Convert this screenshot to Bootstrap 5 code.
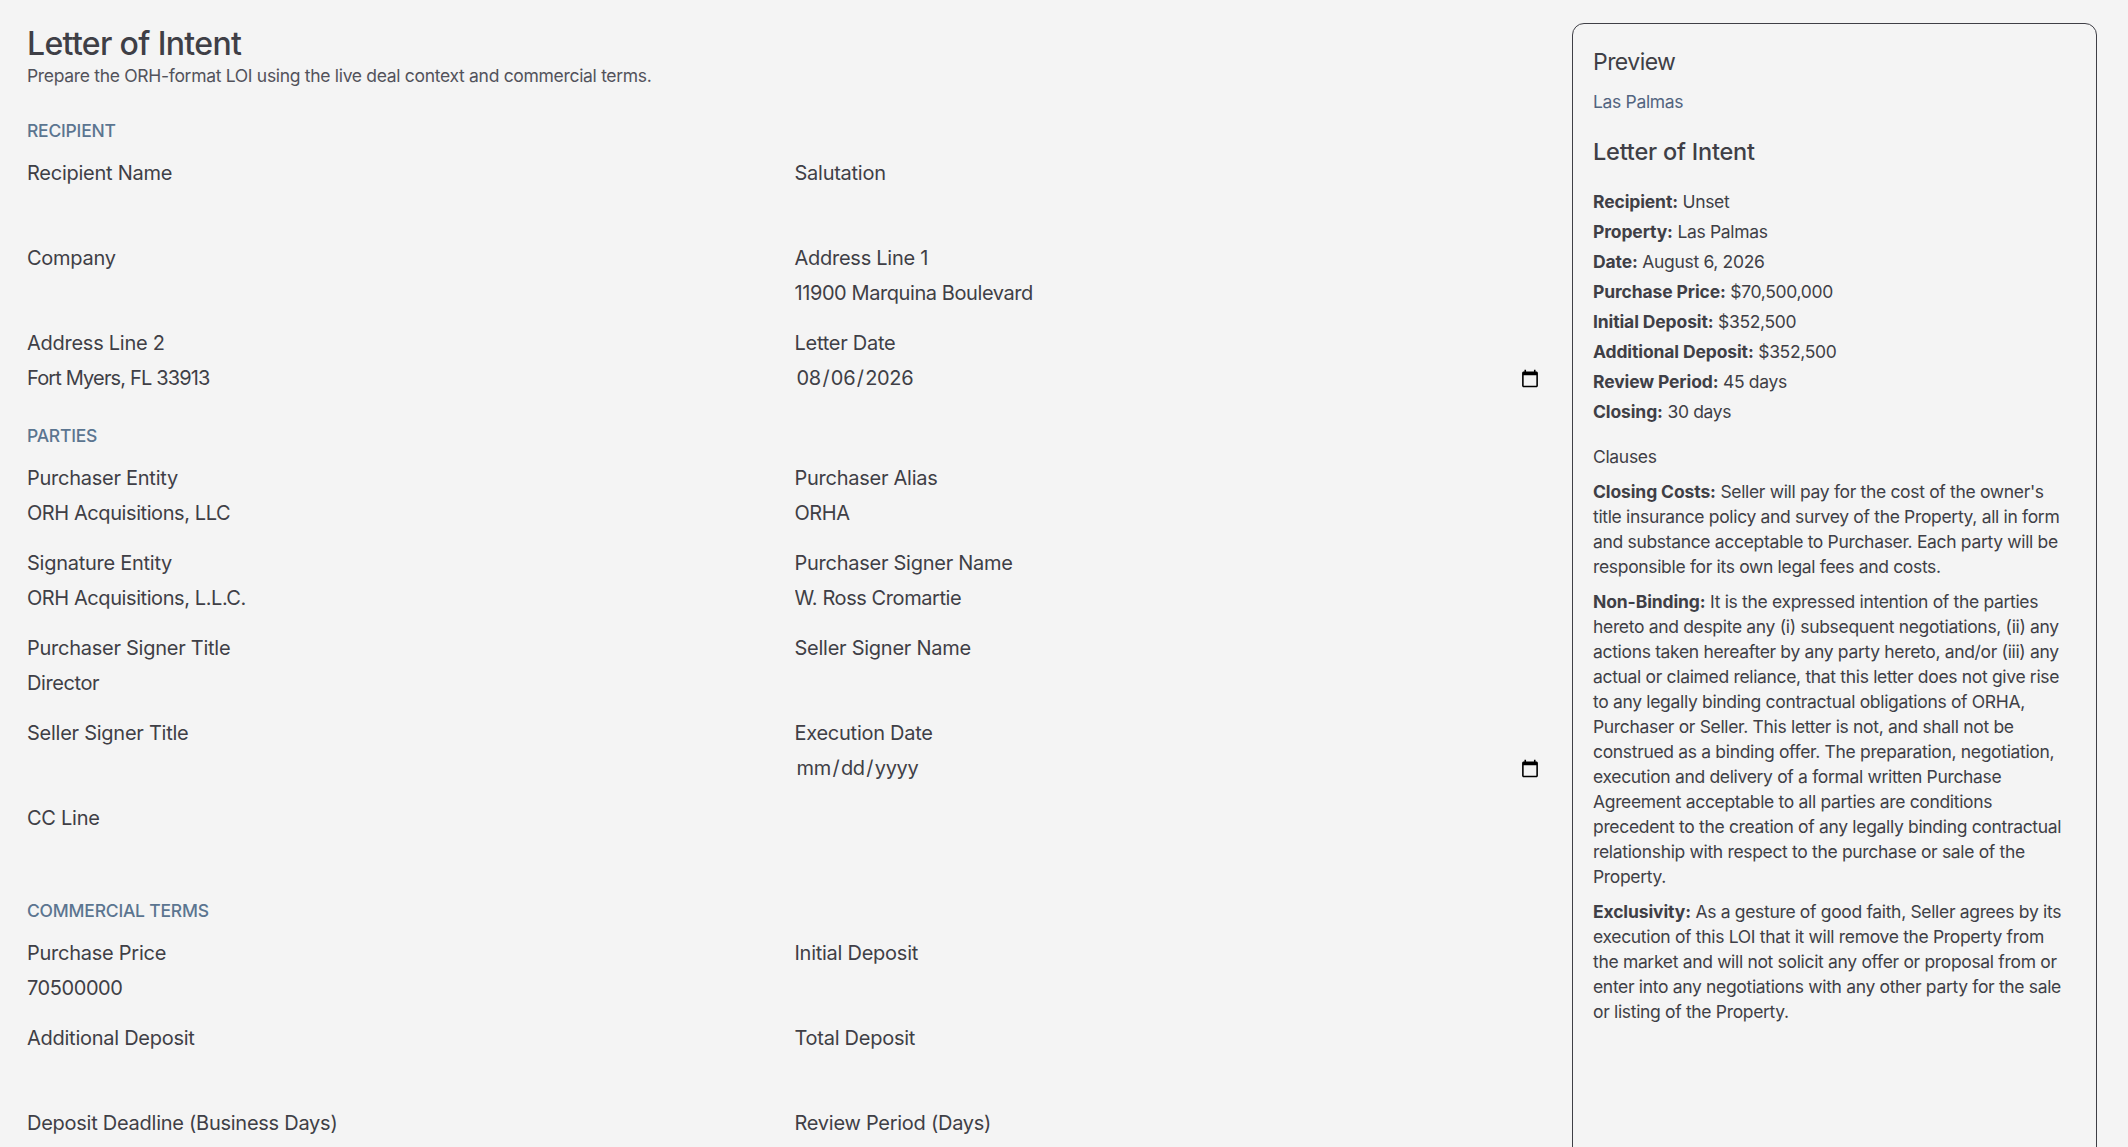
<!DOCTYPE html>
<html lang="en">
<head>
<meta charset="utf-8">
<title>Letter of Intent</title>
<link href="https://cdn.jsdelivr.net/npm/bootstrap@5.3.0/dist/css/bootstrap.min.css" rel="stylesheet">
<style>
html,body{height:100%;overflow:hidden}
body{background:#f4f4f4;color:#3f3f46;font-family:Inter,"Liberation Sans",sans-serif;font-size:20px;font-weight:375;letter-spacing:-.26px}
.page-wrap{display:flex;gap:30px;padding:23px 31px 0 27px;height:1147px;overflow:hidden}
.form-side{flex:1 1 auto;min-width:0}
.preview-side{flex:0 0 525px}
.page-title{font-size:32px;font-weight:500;line-height:41px;margin:0;letter-spacing:-.65px}
.page-sub{font-size:17.5px;line-height:24px;color:#52525b;margin:0 0 30px;letter-spacing:-.31px}
.sec-head{font-size:17.5px;font-weight:500;color:#5b7590;line-height:26px;text-transform:uppercase;margin-bottom:12px;letter-spacing:-.22px}
.field-grid{display:grid;grid-template-columns:1fr 1fr;column-gap:20px;row-gap:15px;margin-bottom:27px}
.fld-label{display:block;line-height:35px;height:35px;margin:0}
.fld-input{display:block;height:35px;line-height:35px;padding:0;border:0;border-radius:0;background:transparent;color:#3f3f46;font-size:20px;font-weight:375;letter-spacing:-.42px;box-shadow:none;font-family:inherit}
.fld-input:focus{background:transparent;color:#3f3f46;box-shadow:none}
.fld-date{letter-spacing:-.3px;padding-left:2px}
.fld-date::-webkit-datetime-edit-text{margin:0 1.5px}
.fld-tight{letter-spacing:-.85px}
.preview-box{border:1.5px solid #3f3f46;border-radius:12px;padding:20px;height:1300px;font-size:17.5px;letter-spacing:-.33px;background:#f4f4f4}
.pv-title{font-size:23px;font-weight:400;line-height:36px;margin:0 0 9px;letter-spacing:-.55px}
.pv-prop{color:#52647f;line-height:26px;margin:0 0 19px}
.pv-h{font-size:23.5px;font-weight:500;line-height:36px;margin:0 0 17px;letter-spacing:-.2px}
.pv-line{line-height:30px;margin:0}
.pv-line strong,.pv-clause strong{font-weight:650;letter-spacing:-.12px}
.pv-sub{line-height:26px;margin:17px 0 9px}
.pv-clause{line-height:25px;margin:0 0 10px;white-space:nowrap}
</style>
</head>
<body>
<main class="page-wrap">
<section class="form-side">
<h1 class="page-title">Letter of Intent</h1>
<p class="page-sub">Prepare the ORH-format LOI using the live deal context and commercial terms.</p>

<div class="sec-head">Recipient</div>
<div class="field-grid">
<div><label class="fld-label">Recipient Name</label><input class="form-control fld-input" type="text"></div>
<div><label class="fld-label">Salutation</label><input class="form-control fld-input" type="text"></div>
<div><label class="fld-label">Company</label><input class="form-control fld-input" type="text"></div>
<div><label class="fld-label">Address Line 1</label><input class="form-control fld-input" type="text" value="11900 Marquina Boulevard"></div>
<div><label class="fld-label">Address Line 2</label><input class="form-control fld-input fld-tight" type="text" value="Fort Myers, FL 33913"></div>
<div><label class="fld-label">Letter Date</label><input class="form-control fld-input fld-date" type="date" value="2026-08-06"></div>
</div>

<div class="sec-head">Parties</div>
<div class="field-grid">
<div><label class="fld-label">Purchaser Entity</label><input class="form-control fld-input" type="text" value="ORH Acquisitions, LLC"></div>
<div><label class="fld-label">Purchaser Alias</label><input class="form-control fld-input" type="text" value="ORHA"></div>
<div><label class="fld-label">Signature Entity</label><input class="form-control fld-input" type="text" value="ORH Acquisitions, L.L.C."></div>
<div><label class="fld-label">Purchaser Signer Name</label><input class="form-control fld-input" type="text" value="W. Ross Cromartie"></div>
<div><label class="fld-label">Purchaser Signer Title</label><input class="form-control fld-input" type="text" value="Director"></div>
<div><label class="fld-label">Seller Signer Name</label><input class="form-control fld-input" type="text"></div>
<div><label class="fld-label">Seller Signer Title</label><input class="form-control fld-input" type="text"></div>
<div><label class="fld-label">Execution Date</label><input class="form-control fld-input fld-date" type="date"></div>
<div><label class="fld-label">CC Line</label><input class="form-control fld-input" type="text"></div>
<div></div>
</div>

<div class="sec-head">Commercial Terms</div>
<div class="field-grid">
<div><label class="fld-label">Purchase Price</label><input class="form-control fld-input" type="text" value="70500000"></div>
<div><label class="fld-label">Initial Deposit</label><input class="form-control fld-input" type="text"></div>
<div><label class="fld-label">Additional Deposit</label><input class="form-control fld-input" type="text"></div>
<div><label class="fld-label">Total Deposit</label><input class="form-control fld-input" type="text"></div>
<div><label class="fld-label">Deposit Deadline (Business Days)</label><input class="form-control fld-input" type="text"></div>
<div><label class="fld-label">Review Period (Days)</label><input class="form-control fld-input" type="text"></div>
</div>
</section>

<aside class="preview-side">
<div class="preview-box">
<h2 class="pv-title">Preview</h2>
<p class="pv-prop">Las Palmas</p>
<h3 class="pv-h">Letter of Intent</h3>
<p class="pv-line"><strong>Recipient:</strong> Unset</p>
<p class="pv-line"><strong>Property:</strong> Las Palmas</p>
<p class="pv-line"><strong>Date:</strong> August 6, 2026</p>
<p class="pv-line"><strong>Purchase Price:</strong> $70,500,000</p>
<p class="pv-line"><strong>Initial Deposit:</strong> $352,500</p>
<p class="pv-line"><strong>Additional Deposit:</strong> $352,500</p>
<p class="pv-line"><strong>Review Period:</strong> 45 days</p>
<p class="pv-line"><strong>Closing:</strong> 30 days</p>
<p class="pv-sub">Clauses</p>
<p class="pv-clause"><strong>Closing Costs:</strong> Seller will pay for the cost of the owner's<br>title insurance policy and survey of the Property, all in form<br>and substance acceptable to Purchaser. Each party will be<br>responsible for its own legal fees and costs.</p>
<p class="pv-clause"><strong>Non-Binding:</strong> It is the expressed intention of the parties<br>hereto and despite any (i) subsequent negotiations, (ii) any<br>actions taken hereafter by any party hereto, and/or (iii) any<br>actual or claimed reliance, that this letter does not give rise<br>to any legally binding contractual obligations of ORHA,<br>Purchaser or Seller. This letter is not, and shall not be<br>construed as a binding offer. The preparation, negotiation,<br>execution and delivery of a formal written Purchase<br>Agreement acceptable to all parties are conditions<br>precedent to the creation of any legally binding contractual<br>relationship with respect to the purchase or sale of the<br>Property.</p>
<p class="pv-clause"><strong>Exclusivity:</strong> As a gesture of good faith, Seller agrees by its<br>execution of this LOI that it will remove the Property from<br>the market and will not solicit any offer or proposal from or<br>enter into any negotiations with any other party for the sale<br>or listing of the Property.</p>
</div>
</aside>
</main>
<script src="https://cdn.jsdelivr.net/npm/bootstrap@5.3.0/dist/js/bootstrap.bundle.min.js"></script>
</body>
</html>
